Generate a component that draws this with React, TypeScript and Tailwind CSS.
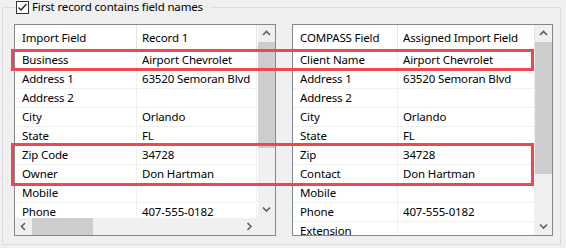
import React from "react";

type Row = [string, string];

const leftRows: Row[] = [
  ["Business", "Airport Chevrolet"],
  ["Address 1", "63520 Semoran Blvd"],
  ["Address 2", ""],
  ["City", "Orlando"],
  ["State", "FL"],
  ["Zip Code", "34728"],
  ["Owner", "Don Hartman"],
  ["Mobile", ""],
  ["Phone", "407-555-0182"],
  ["", ""],
];

const rightRows: Row[] = [
  ["Client Name", "Airport Chevrolet"],
  ["Address 1", "63520 Semoran Blvd"],
  ["Address 2", ""],
  ["City", "Orlando"],
  ["State", "FL"],
  ["Zip", "34728"],
  ["Contact", "Don Hartman"],
  ["Mobile", ""],
  ["Phone", "407-555-0182"],
  ["Extension", ""],
];

function Chevron({ dir }: { dir: "up" | "down" | "left" | "right" }) {
  const pts = {
    up: "1,5 4.5,1.5 8,5",
    down: "1,1.5 4.5,5 8,1.5",
    left: "5,1 1.5,4.5 5,8",
    right: "1.5,1 5,4.5 1.5,8",
  }[dir];
  const vertical = dir === "up" || dir === "down";
  return (
    <svg width={vertical ? 9 : 7} height={vertical ? 7 : 9} viewBox={vertical ? "0 0 9 7" : "0 0 7 9"}>
      <polyline points={pts} fill="none" stroke="#606060" strokeWidth="1.6" />
    </svg>
  );
}

function VScroll({ thumb }: { thumb: number }) {
  return (
    <div className="flex w-[17px] shrink-0 flex-col bg-[#f0f0f0]">
      <div className="flex h-[17px] items-center justify-center">
        <Chevron dir="up" />
      </div>
      <div className="flex-1">
        <div className="w-full bg-[#cdcdcd]" style={{ height: thumb }} />
      </div>
      <div className="flex h-[17px] items-center justify-center">
        <Chevron dir="down" />
      </div>
    </div>
  );
}

function Table({ rows, cols, heads }: { rows: Row[]; cols: [string, string]; heads: [string, string] }) {
  return (
    <div className="flex-1 overflow-hidden bg-white">
      <div className="flex h-[26px] items-center">
        <div className={`${cols[0]} flex h-full shrink-0 items-center border-r border-[#e5e5e5] pl-[7px]`}>{heads[0]}</div>
        <div className={`${cols[1]} flex h-full shrink-0 items-center border-r border-[#e5e5e5] pl-[5px]`}>{heads[1]}</div>
      </div>
      {rows.map(([a, b], i) => (
        <div key={i} className="flex h-[19px]">
          <div className={`${cols[0]} flex shrink-0 items-center overflow-hidden border-r border-b border-[#f0f0f0] pl-[7px]`}>{a}</div>
          <div className={`${cols[1]} flex shrink-0 items-center overflow-hidden border-r border-b border-[#f0f0f0] pl-[5px]`}>{b}</div>
        </div>
      ))}
    </div>
  );
}

export default function App() {
  return (
    <div className="relative h-[248px] w-[566px] overflow-hidden bg-[#f0f0f0] pt-[7px] pl-[2px] font-['Noto_Sans',sans-serif] text-[11.5px] leading-none tracking-[-0.15px] whitespace-nowrap text-black">
      <div className="relative h-[238px] w-[559px] border border-[#dcdcdc] pt-[16px] pl-[11px]">
        <div className="absolute top-[-8px] left-[13px] flex h-[14px] items-center gap-[3px] bg-[#f0f0f0] pr-[7px]">
          <div className="flex h-[13px] w-[13px] items-center justify-center border border-[#333333] bg-white">
            <svg width="11" height="11" viewBox="0 0 11 11">
              <polyline points="1.5,5.5 4,8 9.5,2" fill="none" stroke="#222" strokeWidth="1.3" />
            </svg>
          </div>
          <span className="leading-[14px]">First record contains field names</span>
        </div>

        <div className="flex gap-[16px]">
          <div className="flex h-[212px] w-[262px] flex-col border border-[#828790]">
            <div className="flex h-[193px]">
              <Table rows={leftRows} cols={["w-[122px]", "w-[120px]"]} heads={["Import Field", "Record 1"]} />
              <VScroll thumb={106} />
            </div>
            <div className="flex h-[17px] bg-[#f0f0f0]">
              <div className="flex w-[243px] items-center">
                <div className="flex h-[17px] w-[17px] items-center justify-center">
                  <Chevron dir="left" />
                </div>
                <div className="h-[17px] w-[61px] bg-[#cdcdcd]" />
                <div className="flex-1" />
                <div className="flex h-[17px] w-[17px] items-center justify-center">
                  <Chevron dir="right" />
                </div>
              </div>
              <div className="w-[17px]" />
            </div>
          </div>

          <div className="flex h-[212px] w-[261px] border border-[#828790]">
            <Table rows={rightRows} cols={["w-[105px]", "w-[137px]"]} heads={["COMPASS Field", "Assigned Import Field"]} />
            <VScroll thumb={132} />
          </div>
        </div>
      </div>

      <div className="absolute top-[49px] left-[11px] h-[22px] w-[523px] border-[3px] border-[#ee474d]" />
      <div className="absolute top-[143px] left-[11px] h-[43px] w-[523px] border-[3px] border-[#ee474d]" />
    </div>
  );
}
